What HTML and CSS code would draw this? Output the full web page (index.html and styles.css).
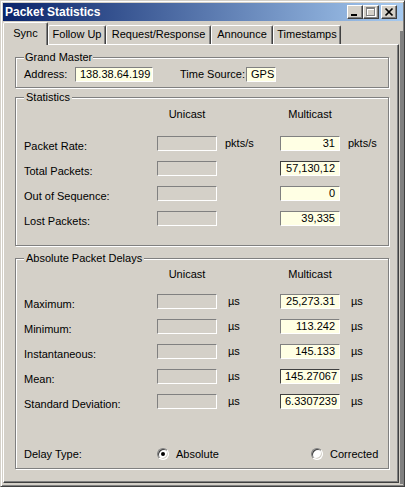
FILE: index.html
```html
<!DOCTYPE html>
<html>
<head>
<meta charset="utf-8">
<title>Packet Statistics</title>
<link rel="stylesheet" href="styles.css">
</head>
<body>
<div class="window">
  <div class="titlebar">
    <span class="title">Packet Statistics</span>
    <div class="caption-buttons">
      <span class="cbtn"><svg width="14" height="12" viewBox="0 0 14 12"><rect x="3" y="8" width="6" height="2" fill="#000"/></svg></span>
      <span class="cbtn"><svg width="14" height="12" viewBox="0 0 14 12" shape-rendering="crispEdges"><g fill="none" stroke="#fff"><rect x="3.5" y="2.5" width="8" height="8"/><line x1="3" y1="3.5" x2="12" y2="3.5"/></g><g fill="none" stroke="#808080"><rect x="2.5" y="1.5" width="8" height="8"/><line x1="2" y1="2.5" x2="11" y2="2.5"/></g></svg></span>
      <span class="cbtn close"><svg width="14" height="12" viewBox="0 0 14 12"><path d="M3.5 2.5 L10.5 9.5 M10.5 2.5 L3.5 9.5" stroke="#000" stroke-width="1.7" fill="none"/></svg></span>
    </div>
  </div>
  <div class="main">
    <div class="content">
      <div class="tabs">
        <div class="tab active t-sync">Sync</div>
        <div class="tab t-follow">Follow Up</div>
        <div class="tab t-req">Request/Response</div>
        <div class="tab t-ann">Announce</div>
        <div class="tab t-ts">Timestamps</div>
      </div>
      <div class="panel">
        <fieldset class="group gm">
          <legend>Grand Master</legend>
          <div class="gm-row">
            <span class="gm-lbl addr-lbl">Address:</span>
            <span class="box val left addr">138.38.64.199</span>
            <span class="gm-lbl ts-lbl">Time Source:</span>
            <span class="box val left tsrc">GPS</span>
          </div>
        </fieldset>

        <fieldset class="group stats">
          <legend>Statistics</legend>
          <div class="grid">
            <span class="hcell"></span><span class="hdr">Unicast</span><span class="hcell"></span><span class="hdr">Multicast</span><span class="hcell"></span>

            <span class="lbl">Packet Rate:</span><span class="box off"></span><span class="unit">pkts/s</span><span class="box val">31</span><span class="unit">pkts/s</span>
            <span class="lbl">Total Packets:</span><span class="box off"></span><span></span><span class="box val dark">57,130,12</span><span></span>
            <span class="lbl">Out of Sequence:</span><span class="box off"></span><span></span><span class="box val">0</span><span></span>
            <span class="lbl">Lost Packets:</span><span class="box off"></span><span></span><span class="box val">39,335</span><span></span>
          </div>
        </fieldset>

        <fieldset class="group delays">
          <legend>Absolute Packet Delays</legend>
          <div class="grid">
            <span class="hcell"></span><span class="hdr hdr2">Unicast</span><span class="hcell"></span><span class="hdr hdr2">Multicast</span><span class="hcell"></span>

            <span class="lbl">Maximum:</span><span class="box off"></span><span class="unit us">µs</span><span class="box val">25,273.31</span><span class="unit us">µs</span>
            <span class="lbl">Minimum:</span><span class="box off"></span><span class="unit us">µs</span><span class="box val">113.242</span><span class="unit us">µs</span>
            <span class="lbl">Instantaneous:</span><span class="box off"></span><span class="unit us">µs</span><span class="box val">145.133</span><span class="unit us">µs</span>
            <span class="lbl">Mean:</span><span class="box off"></span><span class="unit us">µs</span><span class="box val dark">145.27067</span><span class="unit us">µs</span>
            <span class="lbl">Standard Deviation:</span><span class="box off"></span><span class="unit us">µs</span><span class="box val dark">6.3307239</span><span class="unit us">µs</span>
          </div>
          <div class="delay-row">
            <span class="delay-lbl">Delay Type:</span>
            <span class="opt opt1"><span class="radio"><span class="dot"></span></span>Absolute</span>
            <span class="opt"><span class="radio"></span>Corrected</span>
          </div>
        </fieldset>
      </div>
    </div>
    <div class="rstrip"></div>
  </div>
</div>
</body>
</html>
```

FILE: styles.css
```css
html, body {
  margin: 0;
  padding: 0;
  background: #d4d0c8;
}

body {
  font-family: "Liberation Sans", Arial, sans-serif;
  font-size: 11px;
  color: #000;
}

.window {
  width: 405px;
  height: 487px;
  box-sizing: border-box;
  border: 1px solid;
  border-color: #d4d0c8 #404040 #404040 #d4d0c8;
  box-shadow: inset 1px 1px 0 #fff, inset -1px -1px 0 #808080;
  padding: 2px 1px 2px 2px;
  display: flex;
  flex-direction: column;
  background: #d4d0c8;
}

/* ---------- title bar ---------- */
.titlebar {
  height: 18px;
  flex: none;
  display: flex;
  align-items: center;
  background: linear-gradient(to right, #0a246a, #a6caf0);
  padding-right: 6px;
}

.title {
  flex: 1;
  color: #fff;
  font-weight: bold;
  font-size: 12px;
  padding-left: 2px;
  white-space: nowrap;
}

.caption-buttons {
  display: flex;
}

.cbtn {
  width: 16px;
  height: 14px;
  box-sizing: border-box;
  border: 1px solid;
  border-color: #fff #404040 #404040 #fff;
  box-shadow: inset -1px -1px 0 #808080;
  background: #d4d0c8;
  display: block;
}

.cbtn svg {
  display: block;
}

.cbtn.close {
  margin-left: 2px;
}

/* ---------- body row ---------- */
.main {
  flex: 1;
  display: flex;
  min-height: 0;
}

.content {
  flex: 1;
  display: flex;
  flex-direction: column;
  min-width: 0;
}

.rstrip {
  width: 3px;
  border-left: 1px solid #d4d0c8;
  background: #808080;
  margin-top: 10px;
}

/* ---------- tabs ---------- */
.tabs {
  display: flex;
  align-items: flex-start;
  height: 22px;
  margin-top: 1px;
  flex: none;
  position: relative;
  z-index: 1;
}

.tab {
  box-sizing: border-box;
  height: 19px;
  margin-top: 3px;
  border: 1px solid;
  border-bottom: none;
  border-color: #fff #404040 transparent #fff;
  box-shadow: inset -1px 0 0 #808080;
  border-radius: 2px 2px 0 0;
  text-align: center;
  line-height: 17px;
  white-space: nowrap;
  background: #d4d0c8;
}

.tab.active {
  height: 23px;
  margin-top: 0;
  line-height: 20px;
}

.t-sync { width: 45px; }
.t-follow { width: 58px; }
.t-req { width: 105px; }
.t-ann { width: 62px; }
.t-ts { width: 68px; }

/* ---------- panel ---------- */
.panel {
  flex: 1;
  border: 1px solid;
  border-color: #fff #404040 #404040 #fff;
  box-shadow: inset -1px -1px 0 #808080;
  padding: 6px 9px 0 11px;
  margin-bottom: 1px;
}

.group {
  margin: 0;
  min-width: 0;
  border: 1px solid #808080;
  box-shadow: 1px 1px 0 #fff, inset 1px 1px 0 #fff;
  padding: 0 8px;
}

.group legend {
  padding: 0 2px;
  line-height: 13px;
  background: #d4d0c8;
}

.gm {
  padding: 3px 8px 5px;
}

.gm legend {
  padding: 0 1px;
}

.gm-row {
  display: flex;
  align-items: center;
  height: 15px;
}

.gm-lbl {
  line-height: 15px;
  white-space: nowrap;
}

.addr-lbl { width: 51px; }
.addr { width: 78px; }
.ts-lbl { width: 66px; margin-left: 27px; }
.tsrc { width: 30px; }

.stats {
  margin-top: 3px;
  padding: 3px 8px 14px;
}

.delays {
  margin-top: 6px;
  padding: 2px 8px 6px;
}

.grid {
  display: grid;
  grid-template-columns: 133px 60px 63px 60px 1fr;
  row-gap: 5px;
  align-items: start;
}

.hdr {
  text-align: center;
  line-height: 15px;
  margin-bottom: 9px;
  white-space: nowrap;
}

.hdr2 {
  margin-bottom: 7px;
}

.lbl {
  line-height: 20px;
  white-space: nowrap;
}

.unit {
  line-height: 15px;
  padding-left: 8px;
}

.unit.us {
  padding-left: 11px;
}

.box {
  display: block;
  box-sizing: border-box;
  height: 15px;
  border: 1px solid;
  border-color: #808080 #fff #fff #808080;
  line-height: 13px;
  padding: 0 4px;
  white-space: nowrap;
  overflow: hidden;
}

.box.off {
  background: #d4d0c8;
}

.box.val {
  background: #ffffe4;
  text-align: right;
}

.box.val.left {
  text-align: left;
}

.box.dark {
  border-color: #404040 #fff #fff #404040;
}

/* ---------- delay type ---------- */
.delay-row {
  display: flex;
  align-items: center;
  height: 16px;
  margin-top: 32px;
}

.delay-lbl {
  width: 133px;
}

.opt {
  display: flex;
  align-items: center;
  gap: 7px;
}

.opt1 {
  width: 154px;
}

.radio {
  width: 12px;
  height: 12px;
  box-sizing: border-box;
  border-radius: 50%;
  border: 1px solid;
  border-color: #808080 #fff #fff #808080;
  box-shadow: inset 1px 1px 0 #404040, inset -1px -1px 0 #d4d0c8;
  background: #fff;
  display: flex;
  align-items: center;
  justify-content: center;
}

.dot {
  width: 4px;
  height: 4px;
  border-radius: 50%;
  background: #000;
}
```
